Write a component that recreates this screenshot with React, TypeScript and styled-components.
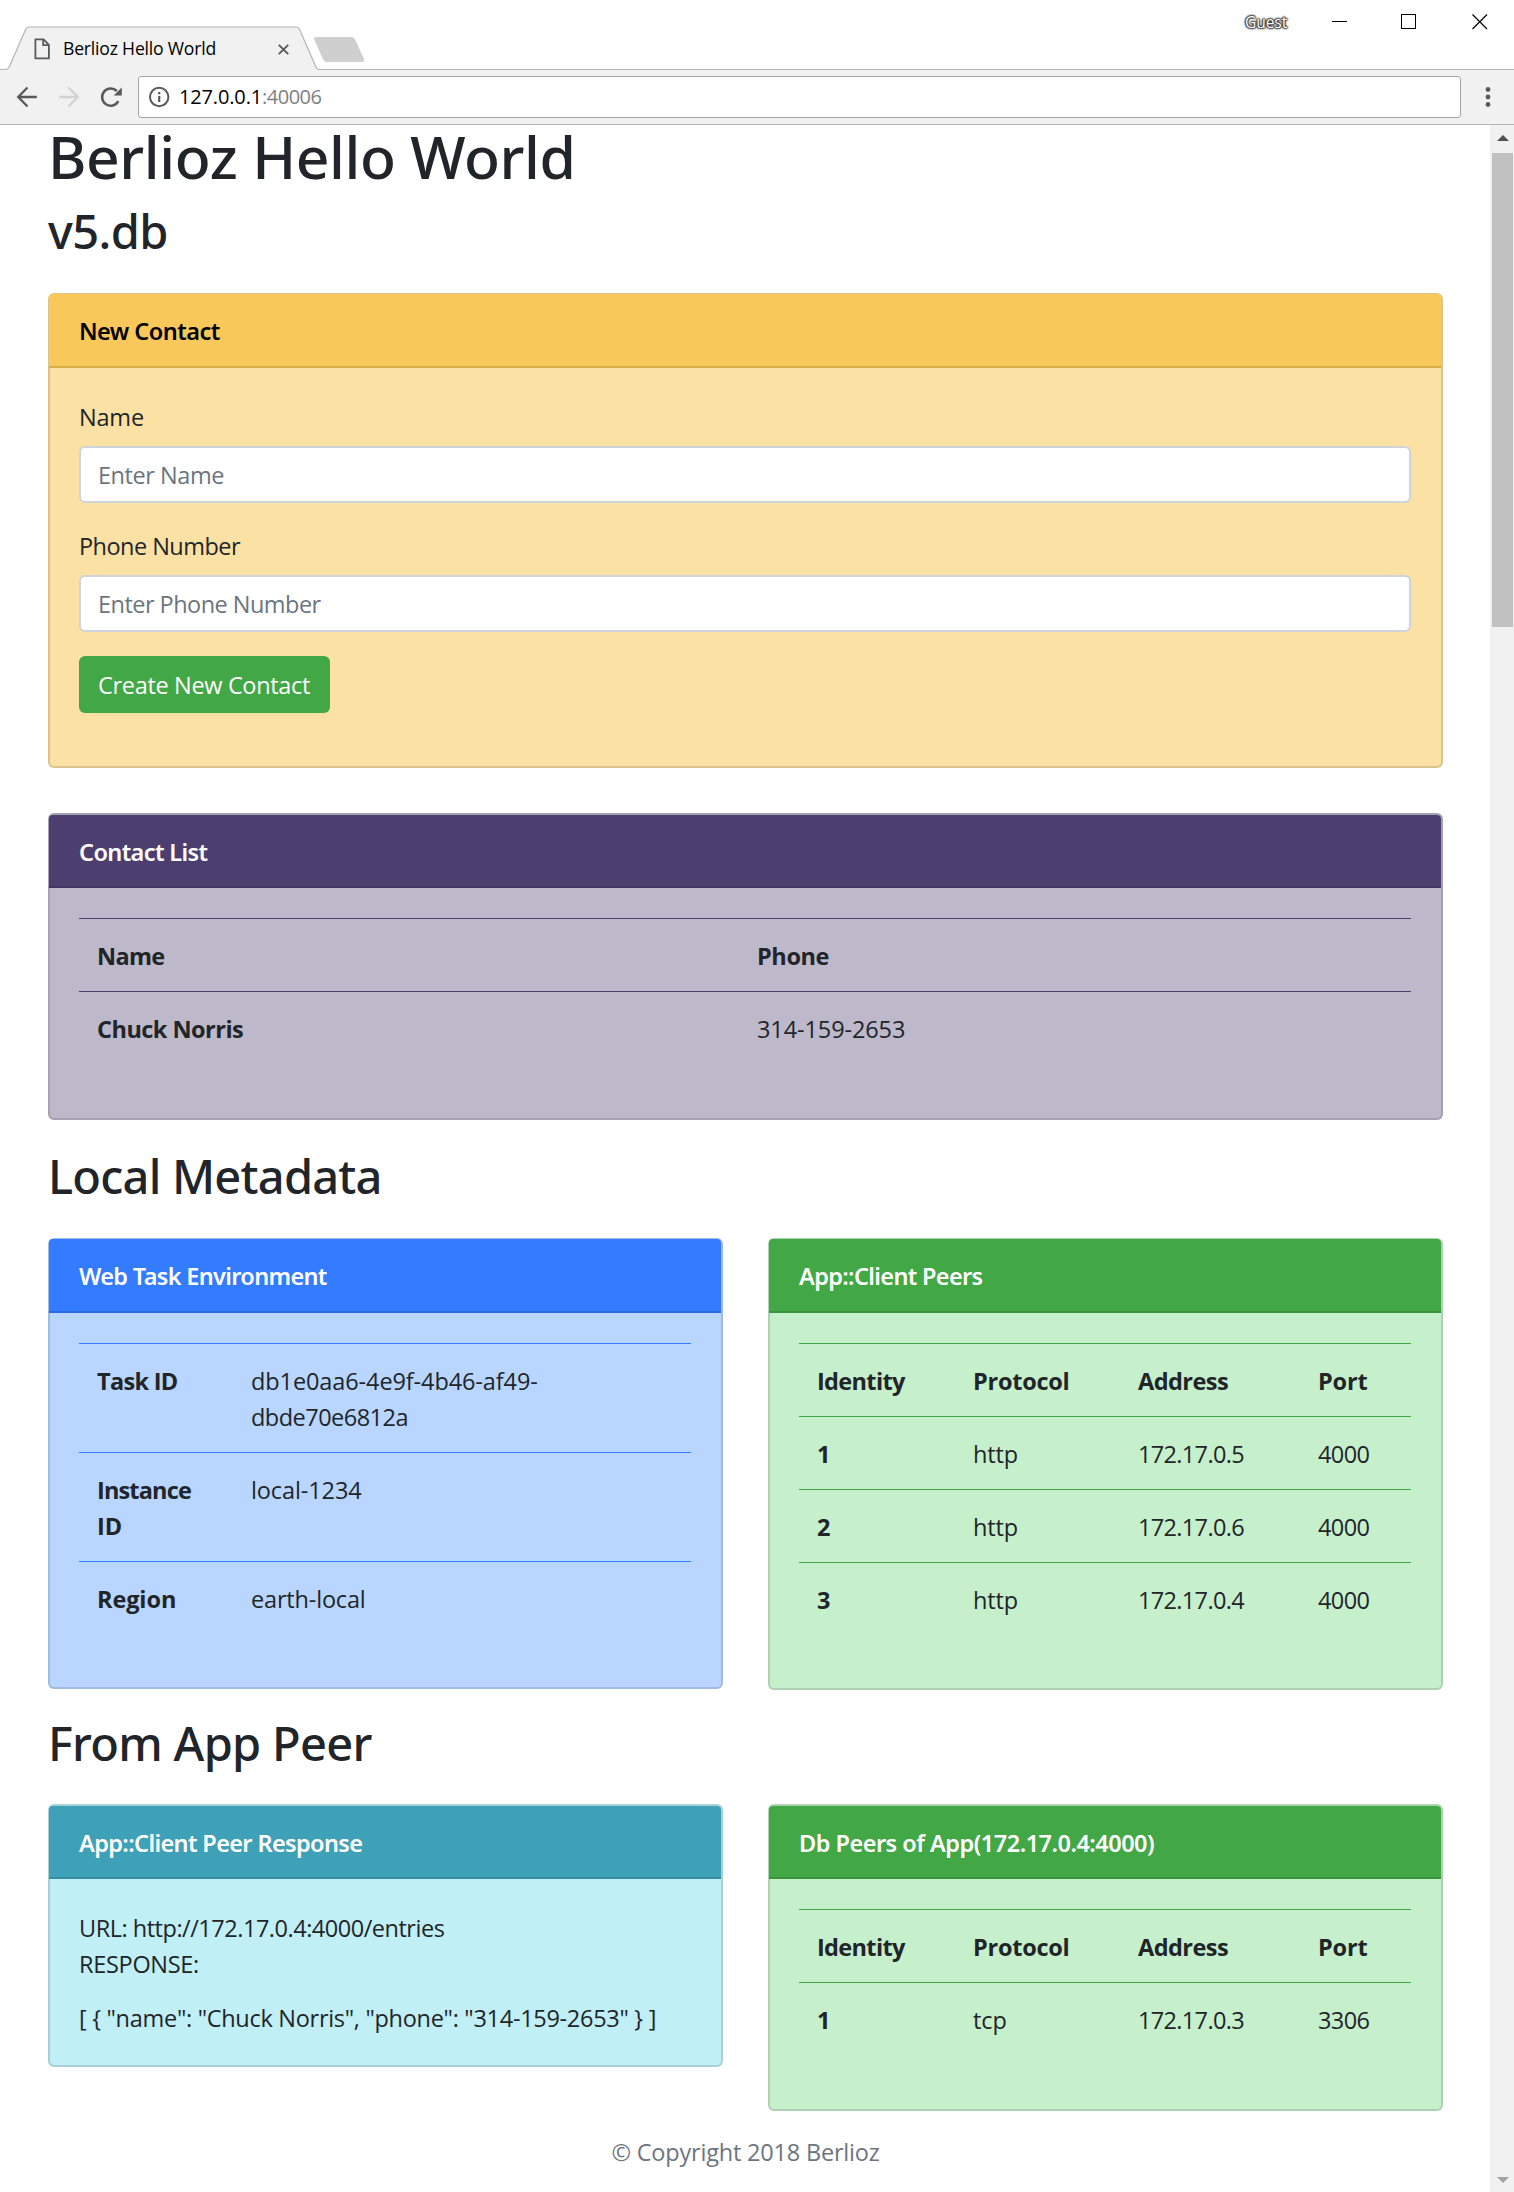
import React from 'react';
import styled, { createGlobalStyle } from 'styled-components';

const GlobalStyle = createGlobalStyle`
  *, *::before, *::after { box-sizing: border-box; }
  html, body { margin: 0; padding: 0; background: #fff; }
  body {
    font-family: "Open Sans", "Noto Sans", sans-serif;
    font-size: 23.5px;
    color: #212529;
    overflow: hidden;
  }
`;

/* ---------- text ---------- */

const T = styled.span<{ $ls?: number }>`
  letter-spacing: ${(p) => p.$ls ?? 0}px;
  white-space: pre;
`;

/* ---------- browser window ---------- */

const Window = styled.div`
  width: 1514px;
  height: 2192px;
  display: flex;
  flex-direction: column;
  overflow: hidden;
`;

const TabStrip = styled.header`
  position: relative;
  height: 70px;
  display: flex;
  justify-content: space-between;
  flex: none;
`;

const StripShape = styled.svg`
  position: absolute;
  inset: 0;
`;

const Tab = styled.div`
  position: relative;
  display: flex;
  align-items: center;
  width: 300px;
  height: 42px;
  margin: 28px 0 0 34px;
  font-size: 17.6px;
  line-height: 24px;
  color: #000;
`;

const TabTitle = styled.div`
  width: 215px;
  margin-left: 12px;
  padding-bottom: 2px;
`;

const TabFileIcon = styled.svg`
  flex: none;
`;

const TabClose = styled.svg`
  flex: none;
`;

const WindowControls = styled.div`
  position: relative;
  display: flex;
  align-items: center;
  height: 44px;
  padding-right: 26px;
`;

const Guest = styled.div`
  width: 43px;
  margin-right: 44px;
  font-size: 15.6px;
  line-height: 22px;
  color: #fff;
  text-shadow: 0 0 1px #333, 0 0 1px #333, 0 0 2px #222, 0 0 2px #333, 0 0 2px #333, 0 0 3px #555, 0 0 2px #444;
`;

const ControlIcons = styled.svg`
  display: block;
`;

const Toolbar = styled.div`
  display: flex;
  align-items: center;
  height: 55px;
  flex: none;
  padding: 0 0 1px 0;
  background: #f1f1f1;
  border-bottom: 1px solid #b4b4b4;
`;

const NavIcons = styled.svg`
  width: 138px;
  height: 54px;
  flex: none;
`;

const Omnibox = styled.div`
  display: flex;
  align-items: center;
  width: 1323px;
  height: 42px;
  border: 1px solid #a6a6a6;
  border-radius: 3px;
  background: #fff;
  padding-left: 9px;
  font-size: 20px;
  line-height: 28px;
  color: #000;
`;

const Url = styled.div`
  padding: 1px 0 0 9px;
`;

const Port = styled.span`
  color: #808080;
`;

const MenuDots = styled.svg`
  width: 53px;
  height: 54px;
`;

const Viewport = styled.div`
  display: flex;
  flex: 1;
`;

const Scrollbar = styled.div`
  width: 24px;
  background: #f1f1f1;
  display: flex;
  flex-direction: column;
  align-items: center;
  justify-content: space-between;
`;

const ScrollTop = styled.div`
  display: flex;
  flex-direction: column;
  align-items: center;
  padding-left: 1px;
`;

const Arrow = styled.div<{ $down?: boolean }>`
  width: 0;
  height: 0;
  margin: ${(p) => (p.$down ? '0 0 9px 1px' : '10px 0 12px')};
  border-left: 6px solid transparent;
  border-right: 6px solid transparent;
  ${(p) => (p.$down ? 'border-top: 6px solid #a3a3a3;' : 'border-bottom: 6px solid #505050;')}
`;

const Thumb = styled.div`
  width: 21px;
  height: 474px;
  background: #c1c1c1;
`;

/* ---------- page ---------- */

const Page = styled.main`
  width: 1490px;
  padding: 0 47px 0 48px;
  display: flex;
  flex-direction: column;
`;

const Title = styled.h1`
  margin: 0 0 15px;
  font-family: "Noto Sans", sans-serif;
  font-size: 58.8px;
  line-height: 62px;
  font-weight: 500;
`;

const Heading = styled.h2<{ $top?: number; $bottom: number }>`
  margin: ${(p) => p.$top ?? 0}px 0 ${(p) => p.$bottom}px;
  font-family: "Noto Sans", sans-serif;
  font-size: 47px;
  line-height: 58px;
  font-weight: 500;
`;

interface Tone {
  head: string;
  body: string;
  text: string;
}

const tones: Record<'yellow' | 'purple' | 'blue' | 'green' | 'teal', Tone> = {
  yellow: { head: '#f8c85a', body: '#fbe1a4', text: '#000' },
  purple: { head: '#4c3f70', body: '#bdb8ca', text: '#fff' },
  blue: { head: '#337bff', body: '#b8d6ff', text: '#fff' },
  green: { head: '#42a745', body: '#c6efcc', text: '#fff' },
  teal: { head: '#3ea1b8', body: '#c0eff5', text: '#fff' },
};

const CardStack = styled.div`
  display: flex;
  flex-direction: column;
  gap: 45px;
`;

const CardBox = styled.section<{ $tone: Tone; $thin?: boolean; $h: number }>`
  height: ${(p) => p.$h}px;
  background: ${(p) => p.$tone.body};
  border: 2px solid rgba(0, 0, 0, 0.125);
  border-top-width: ${(p) => (p.$thin ? 1 : 2)}px;
  border-radius: 6px;
`;

const CardHead = styled.div<{ $tone: Tone; $thin?: boolean }>`
  height: ${(p) => (p.$thin ? 74 : 73)}px;
  margin-left: -1px;
  padding: 18px 30px 0;
  background: ${(p) => p.$tone.head};
  border-bottom: 2px solid rgba(0, 0, 0, 0.125);
  border-radius: 4px 4px 0 0;
  color: ${(p) => p.$tone.text};
  font-family: "Noto Sans", sans-serif;
  font-weight: 600;
  line-height: 38px;
`;

const CardBody = styled.div`
  padding: 30px 30px 0 29px;
`;

const Row = styled.div`
  display: grid;
  grid-template-columns: 675px 675px;
  column-gap: 45px;
  align-items: start;
`;

const Label = styled.label`
  display: block;
  height: 36px;
  margin-bottom: 12px;
  line-height: 38px;
`;

const Input = styled.div`
  height: 57px;
  margin-bottom: 24px;
  padding: 0 17px;
  border: 2px solid #ced4da;
  border-radius: 6px;
  background: #fff;
  color: #6c757d;
  line-height: 55px;
`;

const Button = styled.button`
  display: block;
  width: 251px;
  height: 57px;
  padding: 2px 1px 0 0;
  border: 0;
  border-radius: 6px;
  background: #42a745;
  color: #fff;
  font: inherit;
  line-height: 55px;
`;

const Table = styled.div<{ $cols: string; $line: string }>`
  display: grid;
  grid-template-columns: ${(p) => p.$cols};
  --line: ${(p) => p.$line};
`;

const Cell = styled.div<{ $bold?: boolean }>`
  border-top: 1px solid var(--line);
  padding: 19px 18px 17px;
  line-height: 36px;
  font-weight: ${(p) => (p.$bold ? 700 : 400)};
`;

const Line = styled.p<{ $gap?: number }>`
  margin: ${(p) => p.$gap ?? 0}px 0 0;
  height: 36px;
  line-height: 38px;
`;

const Footer = styled.footer<{ $top: number }>`
  margin-top: ${(p) => p.$top}px;
  text-align: center;
  color: #6c757d;
  line-height: 38px;
`;

/* ---------- parts ---------- */

interface CardProps {
  tone: Tone;
  title: string;
  ls: number;
  height: number;
  thin?: boolean;
  children: React.ReactNode;
}

const Card = ({ tone, title, ls, height, thin, children }: CardProps) => (
  <CardBox $tone={tone} $thin={thin} $h={height}>
    <CardHead $tone={tone} $thin={thin}>
      <T $ls={ls}>{title}</T>
    </CardHead>
    <CardBody>{children}</CardBody>
  </CardBox>
);

const peerHead: [string, number][] = [
  ['Identity', -0.66],
  ['Protocol', -0.25],
  ['Address', -0.55],
  ['Port', -0.17],
];

const PeerTable = ({ rows }: { rows: string[][] }) => (
  <Table $cols="156px 165px 180px 111px" $line={tones.green.head}>
    {peerHead.map(([h, ls]) => (
      <Cell key={h} $bold>
        <T $ls={ls}>{h}</T>
      </Cell>
    ))}
    {rows.map((r) =>
      r.map((v, i) => (
        <Cell key={r[0] + i} $bold={i === 0}>
          <T $ls={[0, -0.1, -0.66, -0.6][i]}>{v}</T>
        </Cell>
      )),
    )}
  </Table>
);

const Chrome = () => (
  <>
    <TabStrip>
      <StripShape width="1514" height="70" fill="none">
        <path
          d="M0 69.5H5.5C7.5 69.5 8.4 68.6 9.2 67L25.6 29.6C26.4 27.8 27.2 27 29 27H296C297.8 27 298.8 27.8 299.6 29.6L316 67C316.8 68.6 317.7 69.5 319.5 69.5V70H0Z"
          fill="#f1f1f1"
        />
        <path
          d="M0 69.5H5.5C7.5 69.5 8.4 68.6 9.2 67L25.6 29.6C26.4 27.8 27.2 27 29 27H296C297.8 27 298.8 27.8 299.6 29.6L316 67C316.8 68.6 317.7 69.5 319.5 69.5H1514"
          stroke="#b4b4b4"
          strokeWidth="1.2"
        />
        <path
          d="M316 37.5H351.5C353 37.5 354 38.2 354.7 39.6L363.6 59C364.3 60.7 363.8 61.6 362.2 61.6H327C325.3 61.6 324.3 60.9 323.6 59.4L314.6 39.5C314.1 38.3 314.6 37.5 316 37.5Z"
          fill="#cfcfcf"
          stroke="#c2c2c2"
          strokeWidth="0.6"
        />
      </StripShape>
      <Tab>
        <TabFileIcon width="17" height="22" fill="none" stroke="#5a5a5a" strokeWidth="1.8">
          <path d="M1.400 1.400H9.600L14.900 6.900V20.300H1.400Z" />
          <path d="M9.200 1.600V7.100H14.700" />
        </TabFileIcon>
        <TabTitle>
          <T $ls={-0.2}>Berlioz Hello World</T>
        </TabTitle>
        <TabClose width="11" height="11" stroke="#5a5a5a" strokeWidth="1.9">
          <path d="M0.800 0.800L10.200 10.200M10.200 0.800L0.800 10.200" />
        </TabClose>
      </Tab>
      <WindowControls>
        <Guest>
          <T $ls={-0.1}>Guest</T>
        </Guest>
        <ControlIcons width="156" height="16" fill="none" stroke="#000" shapeRendering="crispEdges">
          <path d="M0 7.5H15" />
          <rect x="69.500" y="0.500" width="14" height="14" />
          <path d="M140.500 0.500L155 15M155 0.500L140.500 15" shapeRendering="auto" strokeWidth="1.2" />
        </ControlIcons>
      </WindowControls>
    </TabStrip>
    <Toolbar>
      <NavIcons viewBox="0 70 138 54" fill="none" strokeWidth="2.3">
        <path d="M36.800 97H18.800M27.500 87.500L18.200 97L27.500 106.500" stroke="#5a5a5a" />
        <path d="M59.200 97H77.200M68.500 87.500L77.800 97L68.500 106.500" stroke="#d2d2d2" />
        <path d="M118.300 101.200A8.600 8.600 0 1 1 116.800 91" stroke="#5a5a5a" strokeWidth="2.5" />
        <path d="M121.800 87.500V95.600H113.700Z" fill="#5a5a5a" />
      </NavIcons>
      <Omnibox>
        <svg width="22" height="22" viewBox="0 0 22 22" fill="none" stroke="#5a5a5a" strokeWidth="2">
          <circle cx="11.200" cy="11" r="9.200" />
          <path d="M11.200 10V16M11.200 6V8.200" strokeWidth="2.2" />
        </svg>
        <Url>
          <T $ls={-0.15}>127.0.0.1</T>
          <Port>
            <T $ls={-0.5}>:40006</T>
          </Port>
        </Url>
      </Omnibox>
      <MenuDots viewBox="1461 70 53 54" fill="#5a5a5a">
        <circle cx="1488" cy="89.500" r="2.4" />
        <circle cx="1488" cy="97" r="2.4" />
        <circle cx="1488" cy="104.500" r="2.4" />
      </MenuDots>
    </Toolbar>
  </>
);

export default function App() {
  return (
    <Window>
      <GlobalStyle />
      <Chrome />
      <Viewport>
        <Page>
          <Title>
            <T $ls={-0.42}>Berlioz Hello World</T>
          </Title>
          <Heading $bottom={33}>
            <T $ls={-0.6}>v5.db</T>
          </Heading>

          <CardStack>
            <Card tone={tones.yellow} title="New Contact" ls={-0.54} height={475} thin>
              <Label>
                <T $ls={-0.2}>Name</T>
              </Label>
              <Input>
                <T $ls={-0.45}>Enter Name</T>
              </Input>
              <Label>
                <T $ls={-0.54}>Phone Number</T>
              </Label>
              <Input>
                <T $ls={-0.53}>Enter Phone Number</T>
              </Input>
              <Button>
                <T $ls={-0.34}>Create New Contact</T>
              </Button>
            </Card>

            <Card tone={tones.purple} title="Contact List" ls={-0.61} height={307}>
              <Table $cols="660px 672px" $line={tones.purple.head}>
                <Cell $bold>
                  <T $ls={-0.7}>Name</T>
                </Cell>
                <Cell $bold>
                  <T $ls={-0.4}>Phone</T>
                </Cell>
                <Cell $bold>
                  <T $ls={-0.52}>Chuck Norris</T>
                </Cell>
                <Cell>
                  <T $ls={-0.1}>314-159-2653</T>
                </Cell>
              </Table>
            </Card>
          </CardStack>

          <Heading $top={27} $bottom={33}>
            <T $ls={-0.78}>Local Metadata</T>
          </Heading>

          <Row>
            <Card tone={tones.blue} title="Web Task Environment" ls={-0.66} height={451} thin>
              <Table $cols="154px 458px" $line={tones.blue.head}>
                <Cell $bold>
                  <T $ls={-0.7}>Task ID</T>
                </Cell>
                <Cell>
                  <T $ls={-0.1}>db1e0aa6-4e9f-4b46-af49-</T>
                  <br />
                  <T $ls={-0.52}>dbde70e6812a</T>
                </Cell>
                <Cell $bold>
                  <T $ls={-0.85}>Instance</T>
                  <br />
                  <T>ID</T>
                </Cell>
                <Cell>
                  <T $ls={-0.1}>local-1234</T>
                </Cell>
                <Cell $bold>
                  <T $ls={-0.1}>Region</T>
                </Cell>
                <Cell>
                  <T $ls={-0.18}>earth-local</T>
                </Cell>
              </Table>
            </Card>
            <Card tone={tones.green} title="App::Client Peers" ls={-0.65} height={452} thin>
              <PeerTable
                rows={[
                  ['1', 'http', '172.17.0.5', '4000'],
                  ['2', 'http', '172.17.0.6', '4000'],
                  ['3', 'http', '172.17.0.4', '4000'],
                ]}
              />
            </Card>
          </Row>

          <Heading $top={24} $bottom={32}>
            <T $ls={-0.72}>From App Peer</T>
          </Heading>

          <Row>
            <Card tone={tones.teal} title="App::Client Peer Response" ls={-0.63} height={263}>
              <Line>
                <T $ls={-0.48}>URL: http://172.17.0.4:4000/entries</T>
              </Line>
              <Line>
                <T $ls={-0.3}>RESPONSE:</T>
              </Line>
              <Line $gap={18}>
                <T $ls={-0.29}>{'[ { "name": "Chuck Norris", "phone": "314-159-2653" } ]'}</T>
              </Line>
            </Card>
            <Card tone={tones.green} title="Db Peers of App(172.17.0.4:4000)" ls={-0.51} height={307}>
              <PeerTable rows={[['1', 'tcp', '172.17.0.3', '3306']]} />
            </Card>
          </Row>

          <Footer $top={22}>
            <T $ls={-0.19}>© Copyright 2018 Berlioz</T>
          </Footer>
        </Page>
        <Scrollbar>
          <ScrollTop>
            <Arrow />
            <Thumb />
          </ScrollTop>
          <Arrow $down />
        </Scrollbar>
      </Viewport>
    </Window>
  );
}
